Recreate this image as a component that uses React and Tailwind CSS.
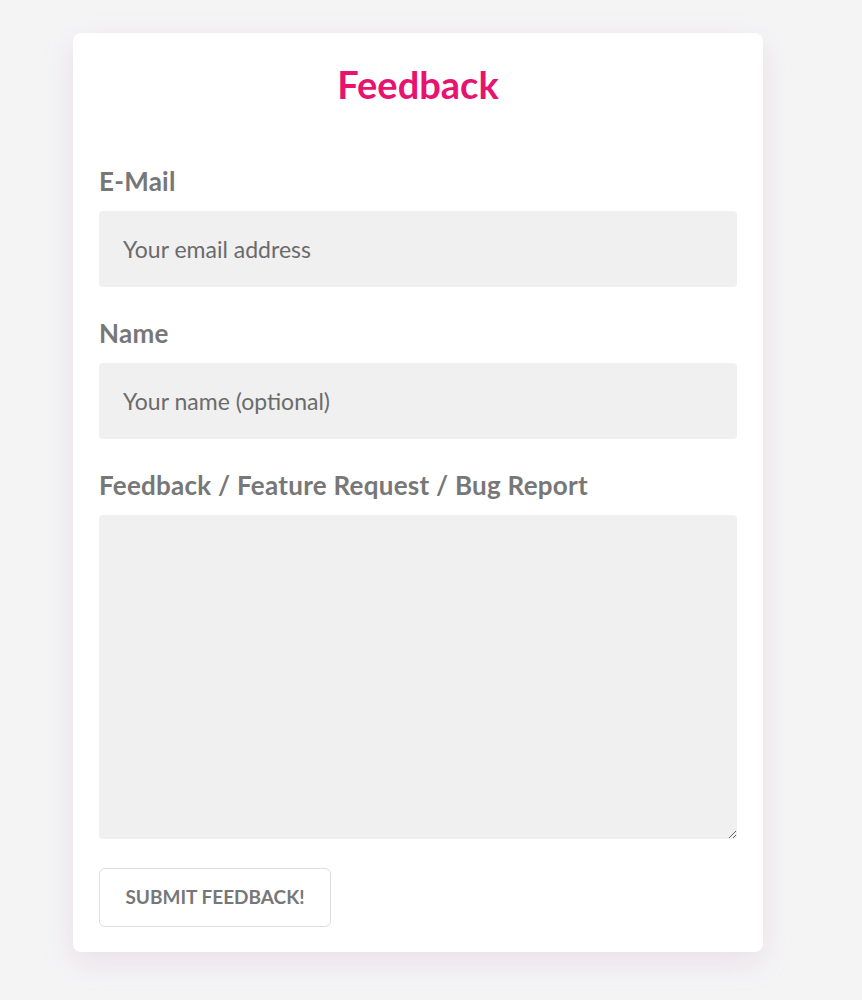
import React from "react";

const font = { fontFamily: "Lato, 'Noto Sans', sans-serif" };

const Label = ({ children }) => (
  <label className="block h-8 text-[26px] leading-8 font-bold tracking-[0.01em] text-[#777777]">
    {children}
  </label>
);

export default function App() {
  return (
    <div className="min-h-[1000px] bg-[#f4f4f5] pt-[33px] pl-[73px]" style={font}>
      <form
        onSubmit={(e) => e.preventDefault()}
        className="w-[690px] bg-white rounded-lg px-[26px] pt-[29px] pb-[25px] shadow-[0_10px_30px_rgba(190,140,175,0.18)]"
      >
        <h1 className="h-11 text-center text-[38px] leading-[44px] font-bold text-[#e8136f]">
          Feedback
        </h1>
        <div className="mt-[59px]">
          <Label>E-Mail</Label>
          <input
            type="email"
            placeholder="Your email address"
            className="mt-[14px] block w-full h-[76px] rounded bg-[#f0f0f0] px-6 text-[23px] text-[#666] placeholder-[#6b6b6b] outline-none"
          />
        </div>
        <div className="mt-[30px]">
          <Label>Name</Label>
          <input
            type="text"
            placeholder="Your name (optional)"
            className="mt-[14px] block w-full h-[76px] rounded bg-[#f0f0f0] px-6 text-[23px] text-[#666] placeholder-[#6b6b6b] outline-none"
          />
        </div>
        <div className="mt-[30px]">
          <Label>Feedback / Feature Request / Bug Report</Label>
          <textarea className="mt-[14px] block w-full h-[324px] rounded bg-[#f0f0f0] px-6 py-4 text-[23px] text-[#666] outline-none" />
        </div>
        <button
          type="submit"
          className="mt-[29px] h-[59px] w-[232px] rounded-md border border-[#dddddd] bg-white text-[19px] font-bold uppercase text-[#777777]"
        >
          Submit Feedback!
        </button>
      </form>
    </div>
  );
}
